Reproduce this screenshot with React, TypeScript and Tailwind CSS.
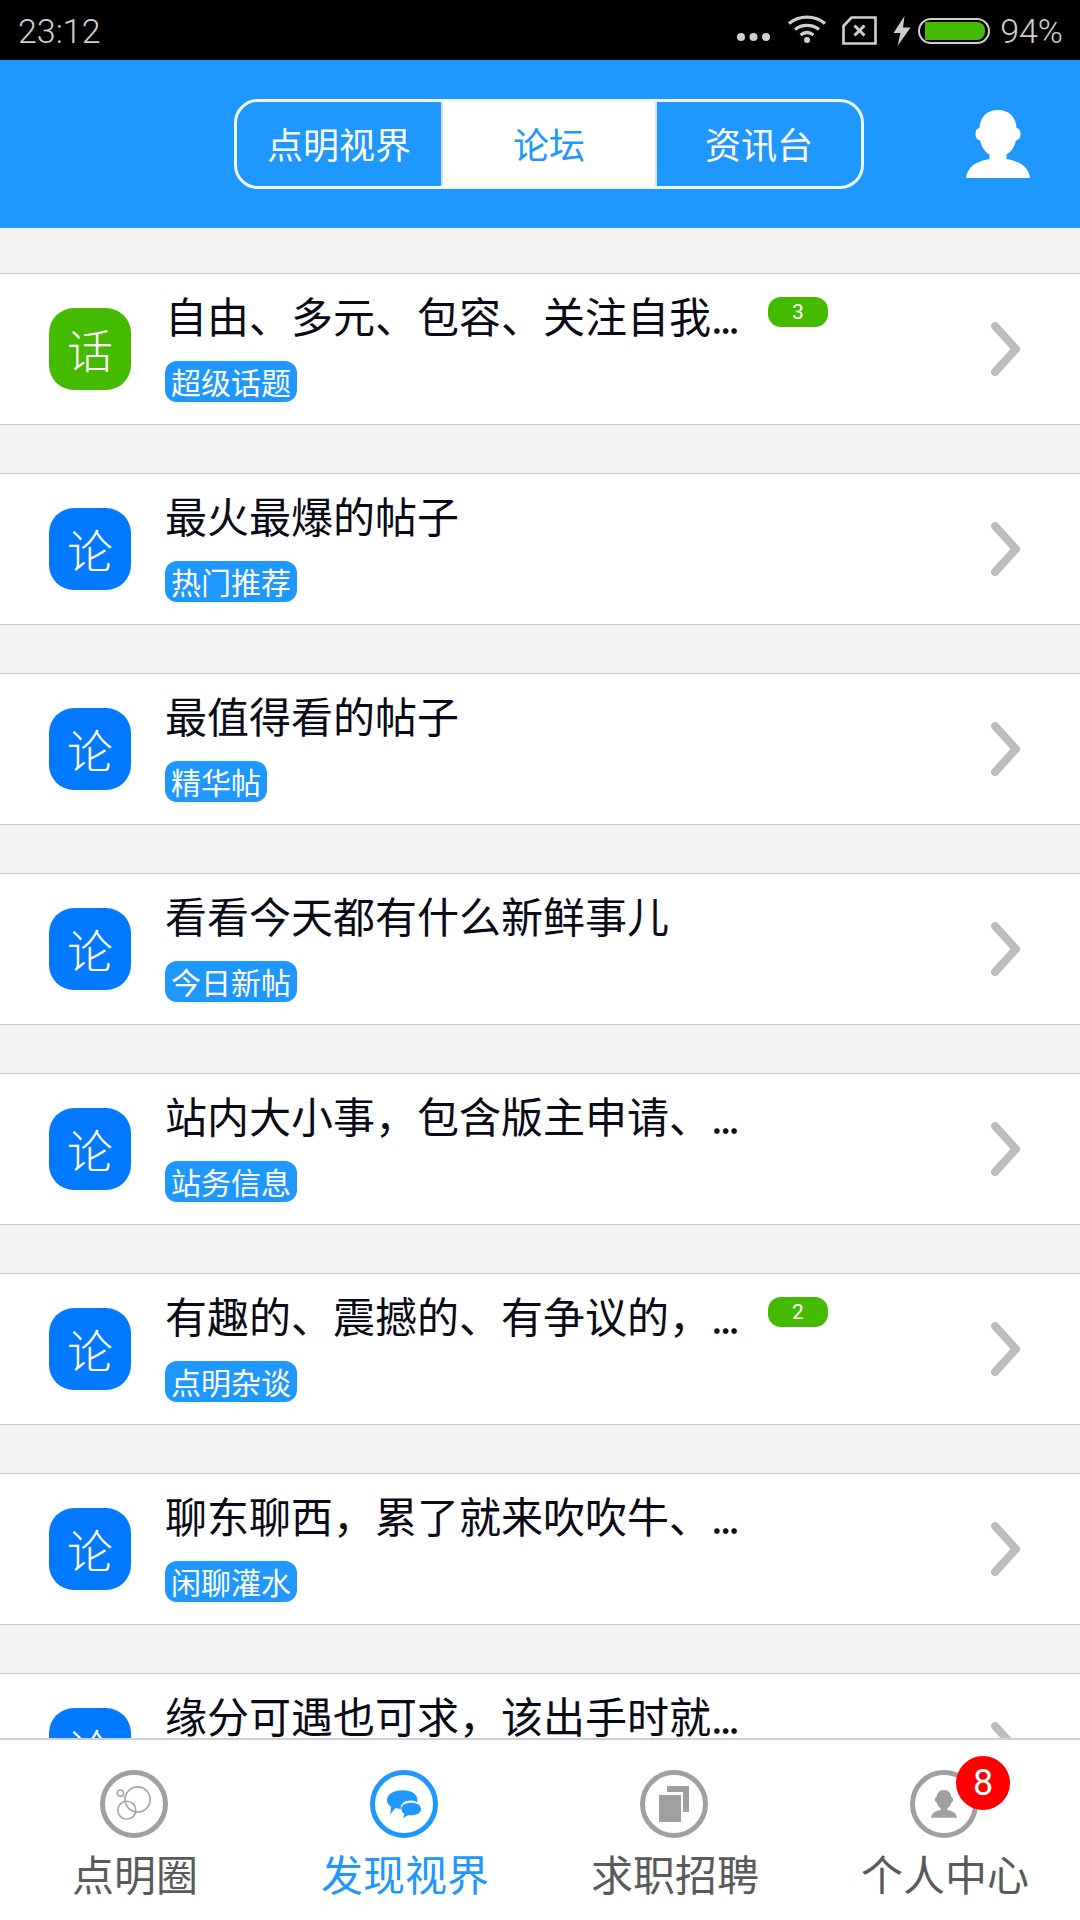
import React from "react";

const CJK = "font-['Noto_Sans_CJK_SC','Noto_Sans',sans-serif]";

type Row = { icon: string; green?: boolean; title: string; cut?: boolean; tag: string; count?: number };

const rows: Row[] = [
  { icon: "话", green: true, title: "自由、多元、包容、关注自我", cut: true, tag: "超级话题", count: 3 },
  { icon: "论", title: "最火最爆的帖子", tag: "热门推荐" },
  { icon: "论", title: "最值得看的帖子", tag: "精华帖" },
  { icon: "论", title: "看看今天都有什么新鲜事儿", tag: "今日新帖" },
  { icon: "论", title: "站内大小事，包含版主申请、", cut: true, tag: "站务信息" },
  { icon: "论", title: "有趣的、震撼的、有争议的，", cut: true, tag: "点明杂谈", count: 2 },
  { icon: "论", title: "聊东聊西，累了就来吹吹牛、", cut: true, tag: "闲聊灌水" },
  { icon: "论", title: "缘分可遇也可求，该出手时就", cut: true, tag: "缘来是你" },
];

function StatusIcons() {
  return (
    <div className="flex items-center">
      <svg width="34" height="10" viewBox="0 0 34 10" className="mt-[12px]" fill="#cfcfcf">
        <circle cx="4" cy="5" r="4" />
        <circle cx="16.5" cy="5" r="4" />
        <circle cx="29" cy="5" r="4" />
      </svg>
      <svg width="40" height="30" viewBox="0 0 40 30" className="ml-[16px] mb-[4px]" fill="none" stroke="#cfcfcf" strokeWidth="3.4">
        <path d="M2 9.5C12 1 28 1 38 9.5" />
        <path d="M8 15.5C15 10 25 10 32 15.5" />
        <path d="M13.5 21C17.5 18 22.5 18 26.5 21" />
        <circle cx="20" cy="26" r="3" fill="#cfcfcf" stroke="none" />
      </svg>
      <svg width="35" height="29" viewBox="0 0 35 29" className="ml-[15px] mb-[2px]" fill="none" stroke="#cfcfcf" strokeWidth="2.6">
        <path d="M1.5 10L9.5 1.5H33.5V27.5H1.5Z" />
        <path d="M12.5 9.5L22.5 19.5M22.5 9.5L12.5 19.5" strokeWidth="3" />
      </svg>
      <svg width="18" height="30" viewBox="0 0 18 30" className="ml-[16px]" fill="#cfcfcf">
        <path d="M11.5 0L0.5 17H7.5L4.5 30L17.5 11.5H10Z" />
      </svg>
      <div className="ml-[7px] flex h-[26px] w-[72px] items-center rounded-[13px] border-2 border-[#cfcfcf] p-[2px]">
        <div className="h-full w-[60px] ml-[3px] rounded-r-[8px] bg-[#44bb00]" />
      </div>
    </div>
  );
}

function ProfileGlyph({ size, color }: { size: number; color: string }) {
  return (
    <svg width={size} height={size * 68 / 64} viewBox="0 0 64 68" fill={color}>
      <path d="M32 0C44 0 50 8 50.5 18C53.5 18.5 54.5 21 54.5 24.500C54.500 28 52.500 30 50 30.500C48.500 37 45 42 40.500 44.500V49C50 51 62 54 64 68H0C2 54 14 51 23.500 49V44.500C19 42 15.500 37 14 30.500C11.500 30 9.500 28 9.500 24.500C9.500 21 10.500 18.500 13.500 18C14 8 20 0 32 0Z" />
    </svg>
  );
}

function ForumRow({ row }: { row: Row }) {
  return (
    <div className="relative flex h-[152px] shrink-0 items-center border-y border-[#cccccc] bg-white">
      <div
        className={`ml-[49px] flex h-[82px] w-[82px] shrink-0 items-center justify-center rounded-[25px] pb-[3px] text-[46px] font-light leading-none text-white ${
          row.green ? "bg-[#44bb00]" : "bg-[#0379ff]"
        }`}
      >
        {row.icon}
      </div>
      <div className="ml-[34px] flex min-w-0 flex-1 flex-col items-start self-start pt-[14px]">
        <div className="flex items-start">
          <span className="w-[572px] whitespace-nowrap text-[42px] leading-[54px] text-[#0a0a18]">
            {row.title}
            {row.cut && <span className="tracking-[-3px]">...</span>}
          </span>
          {row.count !== undefined && (
            <span className="ml-[31px] mt-[9px] flex h-[30px] w-[60px] items-center justify-center rounded-[13px] bg-[#44bb00] font-['Roboto',sans-serif] text-[21px] leading-none text-white">
              {row.count}
            </span>
          )}
        </div>
        <span className="mt-[19px] rounded-[12px] bg-[#1e98ff] px-[6px] text-[30px] leading-[41px] text-white">{row.tag}</span>
      </div>
      <svg width="29" height="54" viewBox="0 0 29 54" className="mr-[60px] shrink-0" fill="none" stroke="#bdbdbd" strokeWidth="8" strokeLinecap="round" strokeLinejoin="round">
        <path d="M4 4L25 27L4 50" />
      </svg>
    </div>
  );
}

function NavItem({ label, active, glyph, badge }: { label: string; active?: boolean; glyph: React.ReactNode; badge?: number }) {
  return (
    <div className="flex w-[270px] flex-col items-center pt-[30px]">
      <div className="relative -translate-x-px">
        <div className={`flex h-[68px] w-[68px] items-center justify-center rounded-full border-[5px] ${active ? "border-[#1e98ff]" : "border-[#a0a0a0]"}`}>
          {glyph}
        </div>
        {badge !== undefined && (
          <span className="absolute left-[46px] top-[-14px] flex h-[54px] w-[54px] items-center justify-center rounded-full bg-[#fe0000] font-['Roboto',sans-serif] text-[36px] leading-none text-white">
            {badge}
          </span>
        )}
      </div>
      <span className={`mt-[8px] text-[42px] leading-[54px] ${active ? "text-[#1e98ff]" : "text-[#5a5a5a]"}`}>{label}</span>
    </div>
  );
}

export default function App() {
  return (
    <div className={`flex h-[1920px] w-[1080px] flex-col overflow-hidden bg-[#f2f2f2] ${CJK}`}>
      {/* system status bar */}
      <div className="flex h-[60px] shrink-0 items-center justify-between bg-black pl-[18px] pr-[17px] pt-[2px] font-['Roboto',sans-serif] text-[34px] font-light text-[#d0d0d0]">
        <span>23:12</span>
        <div className="flex items-center">
          <StatusIcons />
          <span className="ml-[10px]">94%</span>
        </div>
      </div>

      {/* section switcher */}
      <div className="flex h-[168px] shrink-0 items-center bg-[#1e98ff] pl-[234px]">
        <div className="flex h-[90px] w-[630px] overflow-hidden rounded-[24px] border-[3px] border-[#f0f8ff] text-[36px] text-white">
          <div className="flex w-[206px] items-center justify-center border-r-2 border-[#cfe7fb] pb-[3px]">点明视界</div>
          <div className="flex w-[212px] items-center justify-center bg-white pb-[3px] text-[#1e98ff]">论坛</div>
          <div className="flex flex-1 items-center justify-center border-l-2 border-[#cfe7fb] pb-[3px]">资讯台</div>
        </div>
        <div className="ml-[102px]">
          <ProfileGlyph size={64} color="#ffffff" />
        </div>
      </div>

      {/* forum list, cut off by the tab bar */}
      <div className="flex min-h-0 flex-1 flex-col gap-[48px] overflow-hidden pt-[45px]">
        {rows.map((row) => (
          <ForumRow key={row.tag} row={row} />
        ))}
      </div>

      {/* bottom tab bar */}
      <div className="flex h-[182px] shrink-0 border-t-2 border-[#d0d0d0] bg-white">
        <NavItem
          label="点明圈"
          glyph={
            <svg width="36" height="36" viewBox="0 0 40 40" fill="none" stroke="#a6a6a6" strokeWidth="1.800">
              <circle cx="24" cy="15" r="14" />
              <circle cx="12" cy="27" r="10" />
              <circle cx="5" cy="8" r="3.500" />
            </svg>
          }
        />
        <NavItem
          label="发现视界"
          active
          glyph={
            <svg width="34" height="29" viewBox="0 0 38 32" fill="#1e98ff">
              <path d="M18 0C27 0 34 4 34 11C34 12 34 12.500 33.500 13.500C30 11 25 11 21 12.500C17 14 15 17.500 15.500 21C13 21 11 20.500 9.500 20L3.500 27L4.500 18.500C1.500 16.500 0 14 0 11C0 4 8 0 18 0Z" />
              <path d="M27 14C33 14 38 16.500 38 21C38 25.500 33 28 27 28C26 28 25 28 24 27.800L18 31L19.500 26.500C17.500 25 16 23.500 16 21C16 16.500 21 14 27 14Z" />
            </svg>
          }
        />
        <NavItem
          label="求职招聘"
          glyph={
            <svg width="30" height="36" viewBox="0 0 30 36" fill="#a0a0a0">
              <path d="M0 9H22V36H0Z" />
              <path d="M8 0H30V26H24V6H8Z" />
            </svg>
          }
        />
        <NavItem label="个人中心" badge={8} glyph={<ProfileGlyph size={26} color="#a0a0a0" />} />
      </div>
    </div>
  );
}
